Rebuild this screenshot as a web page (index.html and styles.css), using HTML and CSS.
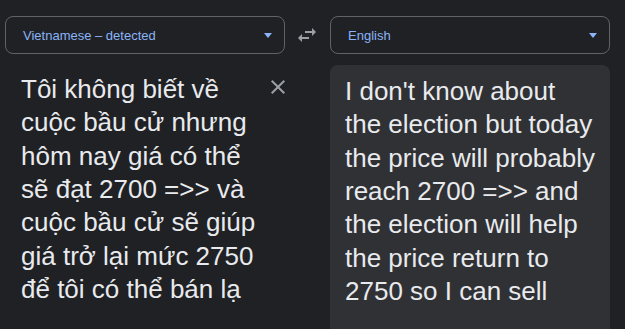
FILE: index.html
```html
<!DOCTYPE html>
<html lang="vi">
<head>
<meta charset="utf-8">
<title>Translate</title>
<link rel="stylesheet" href="styles.css">
</head>
<body>
<div class="app">
  <div class="lang-select">
    <span class="lang-name">Vietnamese – detected</span>
    <span class="caret"></span>
  </div>
  <div class="swap">
    <svg width="24" height="24" viewBox="0 0 24 24" aria-hidden="true"><path d="M6.99 11L3 15l3.99 4v-3H14v-2H6.99v-3zM21 9l-3.99-4v3H10v2h7.01v3L21 9z" fill="#9aa0a6"/></svg>
  </div>
  <div class="lang-select">
    <span class="lang-name">English</span>
    <span class="caret"></span>
  </div>

  <div class="source">
    <div class="source-text">Tôi không biết về cuộc bầu cử nhưng hôm nay giá có thể sẽ đạt 2700 =&gt;&gt; và cuộc bầu cử sẽ giúp giá trở lại mức 2750 để tôi có thể bán lạ</div>
    <svg class="clear" width="14" height="14" viewBox="5 5 14 14" aria-hidden="true"><path d="M19 6.41L17.59 5 12 10.59 6.41 5 5 6.41 10.59 12 5 17.59 6.41 19 12 13.41 17.59 19 19 17.59 13.41 12z" fill="#9aa0a6"/></svg>
  </div>
  <div class="spacer"></div>
  <div class="target">
    <div class="target-text">I don't know about the election but today the price will probably reach 2700 =&gt;&gt; and the election will help the price return to 2750 so I can sell</div>
  </div>
</div>
</body>
</html>
```
FILE: styles.css
```css
html, body {
  margin: 0;
  padding: 0;
  background: #202124;
  height: 100%;
  overflow: hidden;
}

body {
  font-family: "Liberation Sans", Arial, sans-serif;
  color: #e8eaed;
}

.app {
  display: grid;
  grid-template-columns: 280px 45px 280px;
  grid-template-rows: 38px 1fr;
  row-gap: 11px;
  padding: 16px 15px 0 5px;
  height: 100vh;
  box-sizing: border-box;
}

.lang-select {
  box-sizing: border-box;
  border: 1px solid #5f6368;
  border-radius: 8px;
  display: flex;
  align-items: center;
  justify-content: space-between;
  padding: 0 12px 0 17px;
}

.lang-name {
  font-size: 13px;
  color: #8ab4f8;
}

.caret {
  width: 0;
  height: 0;
  border-left: 4.5px solid transparent;
  border-right: 4.5px solid transparent;
  border-top: 5px solid #8ab4f8;
  margin-top: 1px;
}

.swap {
  display: flex;
  align-items: center;
  justify-content: center;
  padding-right: 1px;
}

.source {
  display: flex;
  align-items: flex-start;
  gap: 6px;
  padding: 8px 0 0 16px;
}

.source-text,
.target-text {
  font-size: 26px;
  line-height: 33.33px;
}

.source-text {
  width: 244px;
}

.clear {
  flex: none;
  margin-top: 7px;
}

.target {
  background: #303134;
  border-radius: 8px 8px 0 0;
  padding: 10px 0 0 15px;
  overflow: hidden;
}

.target-text {
  width: 253px;
}
```
